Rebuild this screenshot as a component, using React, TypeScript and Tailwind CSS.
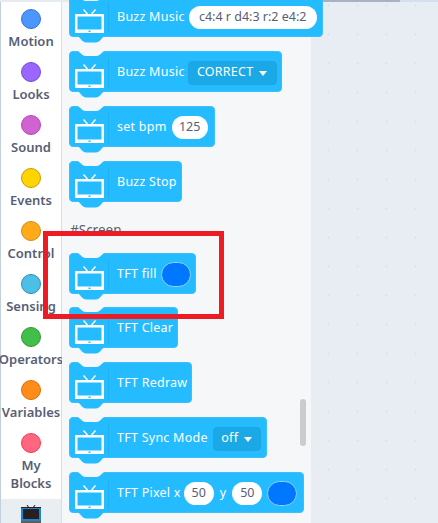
import type { ReactNode } from 'react';

const categories = [
  { name: 'Motion', fill: 'bg-[#4c97ff] border-[#3373cc]' },
  { name: 'Looks', fill: 'bg-[#9966ff] border-[#774dcb]' },
  { name: 'Sound', fill: 'bg-[#cf63cf] border-[#bd42bd]' },
  { name: 'Events', fill: 'bg-[#ffd500] border-[#cc9900]' },
  { name: 'Control', fill: 'bg-[#ffab19] border-[#cf8b17]' },
  { name: 'Sensing', fill: 'bg-[#4cbfe6] border-[#2e8eb8]' },
  { name: 'Operators', fill: 'bg-[#40bf4a] border-[#389438]' },
  { name: 'Variables', fill: 'bg-[#ff8c1a] border-[#db6e00]' },
];

function TvIcon() {
  return (
    <svg width="29" height="24" viewBox="0 0 29 24" className="mt-[12px] shrink-0 self-start">
      <path d="M8.5 0.5 L12.5 5 M20.5 0.5 L16.5 5" stroke="#fff" strokeWidth="1.4" fill="none" />
      <path
        fillRule="evenodd"
        fill="#fff"
        d="M0 5 H29 V24 H0 Z M2.5 7.5 V20.5 H26.5 V7.5 Z M13.5 21.5 V23 H15.5 V21.5 Z"
      />
    </svg>
  );
}

function Pill({ children, width }: { children: ReactNode; width: string }) {
  return (
    <span className={`flex h-[23px] items-center justify-center rounded-full bg-white text-[12.5px] tracking-normal text-[#575e75] ${width}`}>
      {children}
    </span>
  );
}

function Dropdown({ children, width }: { children: ReactNode; width: string }) {
  return (
    <span className={`flex h-[24px] items-center justify-center gap-[6px] rounded-[4px] border border-[#1fa6e2] bg-[#1aa9e6] text-white ${width}`}>
      {children}
      <span className="mt-[1px] h-0 w-0 border-x-[4px] border-t-[5px] border-x-transparent border-t-white" />
    </span>
  );
}

function Swatch() {
  return <span className="block h-[25px] w-[30px] rounded-full border border-[#8fd0ff] bg-[#0077ff]" />;
}

function Block({ width, className = 'mt-[14px]', children }: { width: string; className?: string; children: ReactNode }) {
  return (
    <div className={`relative flex h-[41px] shrink-0 items-center rounded-[4px] border border-[#3cc0fa] bg-[#25bcff] pl-[5px] text-[12.5px] tracking-[0.25px] text-white ${width} ${className}`}>
      {/* notch on top, tab below */}
      <svg width="26" height="6" viewBox="0 0 26 6" className="absolute -top-[1px] left-[8px]">
        <path d="M0 0 L4 3.5 Q6 5 8 5 H18 Q20 5 22 3.5 L26 0 Z" fill="#f5f7f8" />
      </svg>
      <svg width="26" height="7" viewBox="0 0 26 7" className="absolute -bottom-[7px] left-[8px]">
        <path d="M0 0 L4 4.5 Q6 6.5 8 6.5 H18 Q20 6.5 22 4.5 L26 0 Z" fill="#25bcff" />
      </svg>
      <TvIcon />
      <span className="ml-[4px] mt-[6px] h-[30px] w-px shrink-0 self-start bg-[#1fb0f0]" />
      <span className="ml-[8px] mt-[2px] flex items-center whitespace-nowrap">{children}</span>
    </div>
  );
}

export default function App() {
  return (
    <div
      className="relative flex h-[523px] w-[438px] flex-col overflow-hidden bg-white text-[#575e75]"
      style={{ fontFamily: '"Noto Sans", "Open Sans", sans-serif' }}
    >
      <div className="flex h-[2px] shrink-0">
        <div className="w-[95px] bg-[#e6ebf1]" />
        <div className="w-[215px] bg-[#cfd4da]" />
        <div className="w-[90px] bg-[#a9b2c4]" />
        <div className="flex-1 bg-[#d3deee]" />
      </div>

      <div className="flex min-h-0 flex-1">
        {/* categories */}
        <div className="flex w-[62px] shrink-0 flex-col border-l border-r border-l-[#c3cfdb] border-r-[#d9dfe5]">
          {categories.map((c) => (
            <div key={c.name} className="flex h-[53px] shrink-0 flex-col items-center pt-[7px]">
              <span className={`h-[20px] w-[20px] shrink-0 rounded-full border ${c.fill}`} />
              <span className="mt-[3px] whitespace-nowrap text-[13px] font-semibold leading-[18px]">{c.name}</span>
            </div>
          ))}
          <div className="flex h-[73px] shrink-0 flex-col items-center pt-[7px]">
            <span className="h-[20px] w-[20px] shrink-0 rounded-full border border-[#ff3355] bg-[#ff6680]" />
            <span className="mt-[3px] text-center text-[13px] font-semibold leading-[18px]">
              My
              <br />
              Blocks
            </span>
          </div>
          <div className="flex flex-1 justify-center bg-[#e9eef2] pt-[6px]">
            <svg width="20" height="18" viewBox="0 0 20 18" className="shrink-0">
              <path d="M6 0 L8 3 M14 0 L12 3" stroke="#33445a" strokeWidth="1.2" fill="none" />
              <rect x="0" y="2" width="20" height="14" fill="#1488d8" />
              <rect x="0" y="2" width="20" height="1" fill="#222" />
              <rect x="2" y="4" width="16" height="10" fill="#2a1f1c" />
              <rect x="0" y="16" width="20" height="2" fill="#6e5a4a" />
            </svg>
          </div>
        </div>

        {/* block palette */}
        <div className="relative flex w-[249px] shrink-0 flex-col bg-[#f5f7f8] pl-[7px]">
          <div className="-mt-[6px] flex flex-col items-start">
            <Block width="w-[254px]" className="mt-0 z-10">
              Buzz Music
              <span className="ml-[4px]">
                <Pill width="w-[128px]">c4:4 r d4:3 r:2 e4:2</Pill>
              </span>
            </Block>
            <Block width="w-[213px]">
              Buzz Music
              <span className="ml-[3px]">
                <Dropdown width="w-[89px]">CORRECT</Dropdown>
              </span>
            </Block>
            <Block width="w-[146px]">
              set bpm
              <span className="ml-[5px]">
                <Pill width="w-[36px]">125</Pill>
              </span>
            </Block>
            <Block width="w-[113px]">Buzz Stop</Block>
            <p className="mb-[13px] ml-[1px] mt-[18px] h-[20px] text-[13.5px] leading-[20px]">#Screen</p>
            <Block width="w-[127px]" className="mt-0">
              TFT fill
              <span className="ml-[4px]">
                <Swatch />
              </span>
            </Block>
            <Block width="w-[109px]" className="mt-[13px]">TFT Clear</Block>
            <Block width="w-[123px]">TFT Redraw</Block>
            <Block width="w-[198px]">
              TFT Sync Mode
              <span className="ml-[5px]">
                <Dropdown width="w-[48px]">off</Dropdown>
              </span>
            </Block>
            <Block width="w-[235px]">
              TFT Pixel x
              <span className="ml-[3px]">
                <Pill width="w-[30px]">50</Pill>
              </span>
              <span className="mx-[6px]">y</span>
              <Pill width="w-[30px]">50</Pill>
              <span className="ml-[5px]">
                <Swatch />
              </span>
            </Block>
          </div>
          {/* scrollbar */}
          <div className="absolute left-[238px] top-[397px] h-[47px] w-[6px] rounded-full bg-[#cccccc]" />
        </div>

        {/* workspace */}
        <div className="flex-1 bg-[#e8edf3] bg-[radial-gradient(circle,#dfe4ea_1px,transparent_1.2px)] bg-[size:29px_29px] bg-[position:3px_-11px]" />
      </div>

      {/* highlight drawn over the screenshot */}
      <div className="absolute left-[43px] top-[231px] h-[88px] w-[181px] border-[5px] border-[#ed1c24]" />
    </div>
  );
}
